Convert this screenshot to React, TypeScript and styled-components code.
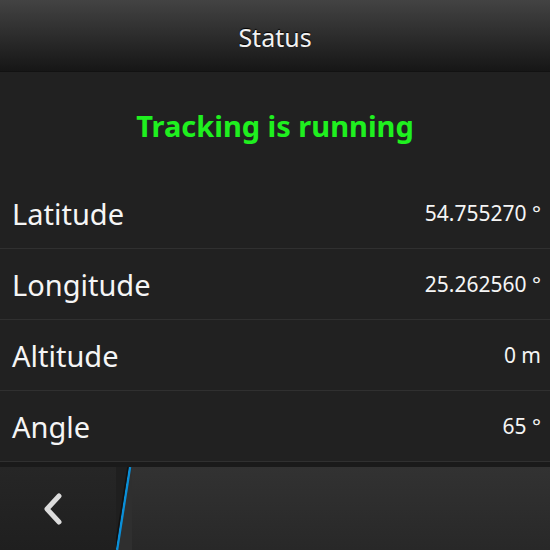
import React from "react";
import styled, { createGlobalStyle } from "styled-components";

const Global = createGlobalStyle`
  html, body { margin: 0; padding: 0; background: #212121; }
  body { font-family: "Noto Sans", "Open Sans", sans-serif; }
`;

const Screen = styled.div`
  width: 550px;
  height: 550px;
  display: flex;
  flex-direction: column;
  background: #212121;
  overflow: hidden;
`;

const TitleBar = styled.header`
  height: 72px;
  flex: none;
  display: flex;
  align-items: center;
  justify-content: center;
  background: linear-gradient(#434343, #161616);
  border-bottom: 1px solid #121212;
  color: #f2f2f2;
  font-size: 25px;
  padding-top: 2px;
  box-sizing: border-box;
  text-shadow: 0 -1px 1px #000;
`;

const Content = styled.main`
  flex: 1;
  display: flex;
  flex-direction: column;
`;

const StatusLine = styled.div`
  height: 106px;
  display: flex;
  align-items: center;
  justify-content: center;
  color: #1ff01f;
  font-weight: 700;
  font-size: 29px;
  box-sizing: border-box;
`;

const Row = styled.div`
  height: 71px;
  box-sizing: border-box;
  display: flex;
  align-items: center;
  justify-content: space-between;
  padding: 0 9px 0 12px;
  border-bottom: 1px solid #303030;
`;

const Label = styled.span`
  color: #f5f5f5;
  font-size: 29px;
`;

const Value = styled.span`
  color: #f5f5f5;
  font-size: 21px;
`;

const ActionBar = styled.footer`
  height: 88px;
  flex: none;
  display: flex;
  border-top: 5px solid #1a1a1a;
  box-sizing: border-box;
  background: #262626;
`;

const BackButton = styled.div`
  width: 116px;
  display: flex;
  align-items: center;
  justify-content: center;
  padding-right: 10px;
  box-sizing: border-box;
  background: linear-gradient(#262626, #1f1f1f);
`;

const Divider = styled.svg`
  width: 16px;
  height: 83px;
  flex: none;
  display: block;
`;

const ActionFill = styled.div`
  flex: 1;
  background: linear-gradient(#323232, #282828);
`;

const rows = [
  { label: "Latitude", value: "54.755270 °" },
  { label: "Longitude", value: "25.262560 °" },
  { label: "Altitude", value: "0 m" },
  { label: "Angle", value: "65 °" },
];

export default function App() {
  return (
    <>
      <Global />
      <Screen>
        <TitleBar>Status</TitleBar>
        <Content>
          <StatusLine>Tracking is running</StatusLine>
          {rows.map((r) => (
            <Row key={r.label}>
              <Label>{r.label}</Label>
              <Value>{r.value}</Value>
            </Row>
          ))}
        </Content>
        <ActionBar>
          <BackButton>
            <svg width="22" height="32" viewBox="0 0 22 32">
              <path d="M17 3 L5 16 L17 29" fill="none" stroke="#dcdcdc" strokeWidth="5" strokeLinecap="round" strokeLinejoin="round" />
            </svg>
          </BackButton>
          <Divider viewBox="0 0 16 83">
            <polygon points="0,0 16,0 16,83 0,83" fill="#1f1f1f" />
            <polygon points="14,0 16,0 16,83 0,83" fill="#2f2f2f" />
            <line x1="14" y1="0" x2="1" y2="83" stroke="#0a8fd8" strokeWidth="2.5" />
            <line x1="12" y1="0" x2="-1" y2="83" stroke="#111" strokeWidth="1.5" />
          </Divider>
          <ActionFill />
        </ActionBar>
      </Screen>
    </>
  );
}
